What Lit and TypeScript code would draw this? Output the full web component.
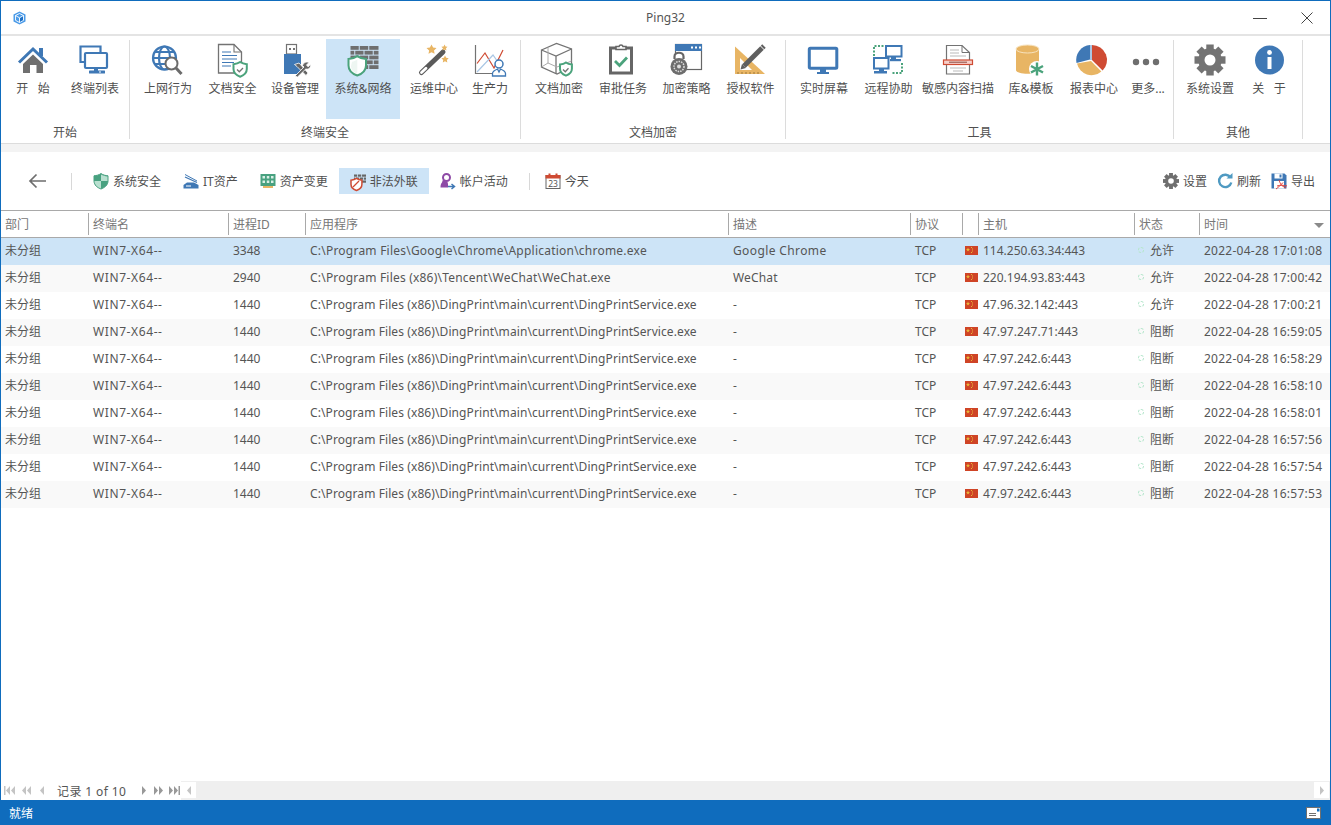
import { LitElement, html, css, svg } from "lit";
import { customElement } from "lit/decorators.js";

const B = "#3f78b5", G = "#737373", GR = "#4ba37c", Y = "#e8b564", R = "#cf4b33";

const shield = (x: number, y: number, s: number, stroke: string, fill: string, sw = 1.6) => svg`
  <g transform="translate(${x} ${y}) scale(${s})">
    <path d="M7 .5 C9 2 11.500 2.600 14 2.800 V8 C14 12 10.500 14.800 7 16 C3.500 14.800 0 12 0 8 V2.800 C2.500 2.600 5 2 7 .5Z" fill=${fill} stroke=${stroke} stroke-width=${sw / s}/>
  </g>`;

const gear = (cx: number, cy: number, r: number, hole: number, col = G) => svg`
  ${[0, 45, 90, 135].map((a) => svg`<rect x=${cx - r * 0.24} y=${cy - r} width=${r * 0.48} height=${r * 2} fill=${col} transform="rotate(${a} ${cx} ${cy})"/>`)}
  <circle cx=${cx} cy=${cy} r=${r * 0.76} fill=${col}/>
  <circle cx=${cx} cy=${cy} r=${hole} fill="#fff"/>`;

const bricks = (x: number, y: number, w: number, rows: number, h: number, gap: number, col: string) => {
  const out = [];
  for (let r = 0; r < rows; r++) {
    const cols = r % 2 ? [0, w * 0.17, w * 0.5, w * 0.83] : [0, w * 0.33, w * 0.67];
    cols.forEach((c, i) => {
      const end = i + 1 < cols.length ? cols[i + 1] - gap : w;
      out.push(svg`<rect x=${x + c} y=${y + r * (h + gap)} width=${end - c} height=${h} fill=${col}/>`);
    });
  }
  return out;
};

const icons: Record<string, unknown> = {
  home: svg`<path d="M6 21 16 11.500 26 21V30H19.500V22H13V30H6Z" fill="#6f6f6f"/>
    <path d="M22 5h4v8h-4z" fill="${B}"/><path d="M2 19.500 16 6l14 13.500" fill="none" stroke="${B}" stroke-width="3"/>`,
  monitors: svg`<path d="M5 19H1.500V3.500H21.500V9" fill="none" stroke="${B}" stroke-width="2.200"/><path d="M8 19H5" stroke="${B}" stroke-width="2"/>
    <rect x="6" y="10" width="22" height="15" rx="1" fill="#fff" stroke="${B}" stroke-width="2.200"/>
    <path d="M15 25h4v3h-4z" fill="${B}"/><rect x="10" y="27.500" width="16" height="3" rx=".5" fill="${B}"/><rect x="20" y="28.500" width="2" height="1" fill="#fff"/>`,
  globe: svg`<g fill="none" stroke="${B}" stroke-width="2.200"><circle cx="12.500" cy="15" r="11.500"/><ellipse cx="12.500" cy="15" rx="5.500" ry="11.500"/><path d="M1 15H24M3 9H22M3 21H22"/></g>
    <circle cx="19.500" cy="20.500" r="6" fill="#fff" stroke="#6b6b6b" stroke-width="2"/><path d="M24 25l5.500 6" stroke="#6b6b6b" stroke-width="3"/>`,
  doc: svg`<path d="M1.500 1.500H17L24.500 9V30H1.500Z" fill="#fff" stroke="${G}" stroke-width="1.300"/><path d="M17 1.500V9H24.500" fill="none" stroke="${G}" stroke-width="1.100"/>
    <path d="M5 9h9M5 12.500h15M5 16h15M5 19.500h12M5 23h9" stroke="${B}" stroke-width="1.100"/>
    ${shield(16.500, 18.500, 0.95, GR, "#fff", 2)}<path d="M20 26.500l2.300 2.300 3.700-3.800" fill="none" stroke="${G}" stroke-width="1.300"/>`,
  usb: svg`<rect x="7.500" y="1.500" width="10" height="9.500" fill="#fff" stroke="${G}" stroke-width="1.200"/><path d="M10 5h2v2h-2zM14 5h2v2h-2z" fill="${G}"/>
    <rect x="5" y="11" width="17" height="20" fill="${B}"/>
    <path d="M15.500 21.500 20 20 29 30 27 32.500 18 23.500Z" fill="#666" stroke="#fff" stroke-width=".8"/>
    <path d="M16 33 25 24 23.500 22.500C25 19 27.500 18.500 30 19.500L27.500 22 29 23.800 31.500 21.500C32 24.500 30 26.800 26.800 26L18.500 34Z" fill="#666" stroke="#fff" stroke-width=".8"/>`,
  wall: svg`${bricks(3.500, 3, 28, 5, 3.800, 1, "#6e6e6e")}
    ${shield(1.500, 12.500, 1.250, GR, "#fff", 2)}<path d="M5 18.800C7 18.300 9 17.600 10.300 16.500V31C7 29.500 4 27 4 23Z" fill="#eef6f2"/>`,
  wand: svg`<path d="M3.500 29.500 25 9" stroke="#5a5a5a" stroke-width="5" stroke-linecap="round"/><path d="M3.500 29.500 8 25.300" stroke="#fff" stroke-width="2.800" stroke-linecap="round"/>
    <path d="M13.500 1.500l1.600 3 3.400.5-2.500 2.400.6 3.400-3.100-1.600-3 1.600.6-3.400L8.500 5l3.400-.5Z" fill="${Y}"/>
    <path d="M26.500 1.500l1 2 2 .3-1.500 1.500.4 2.200-1.900-1-2 1 .4-2.200-1.500-1.500 2.200-.3Z" fill="${Y}"/>
    <path d="M27 12.500l1.200 2.300 2.500.4-1.800 1.700.4 2.500-2.300-1.200-2.200 1.200.4-2.500-1.800-1.700 2.500-.4Z" fill="${Y}"/>`,
  chart: svg`<path d="M1.500 2V30.500H31" fill="none" stroke="${G}" stroke-width="1.200"/>
    <path d="M3 20.500 11 10l9 15 9-18" fill="none" stroke="${R}" stroke-width="1.200"/>
    <path d="M3 29 19 12l9 13" fill="none" stroke="#a9c6e4" stroke-width="1.200"/>
    <circle cx="25" cy="21" r="4" fill="#fff" stroke="${B}" stroke-width="1.500"/>
    <path d="M18.500 33V30.500C18.500 28 21 27 23.500 26L25 29 26.500 26C29 27 31.500 28 31.500 30.500V33Z" fill="#fff" stroke="${B}" stroke-width="1.300"/>`,
  cube: svg`<g fill="none" stroke="${G}" stroke-width="1.300"><path d="M-1.500 7 13.500 .5 28.500 6V24L14 31-1.500 24Z"/><path d="M-1.500 7 13 13 28.500 6M13 13V31"/><path d="M5 4.500V20L-1.500 24M5 20 14 24 28.500 18" stroke="#aaa" stroke-width="1"/></g>
    ${shield(17, 19, 0.85, GR, "#fff", 2)}<path d="M20 26.500l2.300 2.300 3.200-3.500" fill="none" stroke="${G}" stroke-width="1.300"/>`,
  clip: svg`<rect x="3.500" y="5" width="21" height="25" fill="#fff" stroke="#666" stroke-width="3"/><path d="M9 6.500V3.500H12C12.500 1.500 15.500 1.500 16 3.500H19V6.500Z" fill="#fff" stroke="#666" stroke-width="1.600"/>
    <path d="M8 18l4.500 4.500 7.500-8" fill="none" stroke="${GR}" stroke-width="2.800"/>`,
  policy: svg`<rect x="4.500" y="1.500" width="26" height="25" fill="#fff" stroke="#666" stroke-width="1.200"/><rect x="4" y="1" width="27" height="7" fill="${B}"/><path d="M20 3.500h2v2h-2zM24 3.500h2v2h-2zM28 3.500h2v2h-2z" fill="#fff"/>
    <path d="M3.500 16V13.500C3.500 8.500 12.500 8.500 12.500 13.500V16" fill="#fff" stroke="#666" stroke-width="2.200"/>
    <circle cx="8" cy="23.500" r="8.500" fill="#6d6d6d"/><circle cx="8" cy="23.500" r="5" fill="none" stroke="#ddd" stroke-width="1.500" stroke-dasharray="1.500 1"/><circle cx="8" cy="23.500" r="2" fill="#ddd"/>`,
  license: svg`<path d="M0 3.500 30 31H0Z" fill="${Y}"/><path d="M5 15 17 27H5Z" fill="#fff"/><path d="M3 31v-2M7 31v-2M11 31v-2M15 31v-2M19 31v-2M23 31v-2" stroke="#8a6a30" stroke-width=".8"/>
    <path d="M9 23 27 5" stroke="#5f5f5f" stroke-width="5"/><path d="M5.500 26.500 7 21l4 4Z" fill="#5f5f5f"/><path d="M26.500 2 30 5.500" stroke="#5f5f5f" stroke-width="2"/>`,
  screen: svg`<rect x="1.300" y="5.300" width="27.500" height="20" rx="1" fill="#fff" stroke="${B}" stroke-width="3"/><path d="M12 26h6v3h-6z" fill="${B}"/><rect x="9" y="29" width="12" height="2" fill="${B}"/>`,
  remote: svg`<rect x="13" y="3" width="15.500" height="10.500" fill="#fff" stroke="${B}" stroke-width="2"/><path d="M18 14h5v2h-5z" fill="${B}"/><rect x="17" y="16" width="11" height="2.200" fill="${B}"/>
    <rect x="1" y="15" width="14.500" height="10.500" fill="#fff" stroke="${B}" stroke-width="2"/><path d="M6 26h5v2H6z" fill="${B}"/><rect x="1" y="28" width="13" height="2.500" fill="${B}"/>
    <path d="M1 13V3h10M29 20V30H18" fill="none" stroke="${GR}" stroke-width="2" stroke-dasharray="2 1.500"/>`,
  scan: svg`<path d="M4.500 2.500H20L27.500 9.500V31H4.500Z" fill="#fff" stroke="${G}" stroke-width="1.200"/><path d="M20 2.500V9.500H27.500" fill="none" stroke="${G}"/>
    <path d="M8 7h9M8 10h9M8 13h16M8 25h16M11 28h10" stroke="#b9b9b9" stroke-width="1"/>
    <rect x="1.500" y="17" width="29" height="4.500" fill="#f6cfc9" stroke="${R}" stroke-width="1.200"/><path d="M7 19.200H25" stroke="#8a4a40" stroke-width="1"/>`,
  db: svg`<path d="M1 6V27C1 32 24 32 24 27V6Z" fill="${Y}"/><ellipse cx="12.500" cy="6" rx="11.500" ry="4" fill="${Y}" stroke="#f7e3bf" stroke-width="1"/>
    <circle cx="22" cy="26" r="8" fill="#fff"/><g stroke="${GR}" stroke-width="2.400"><path d="M22 19.500v13M16 23l12 6.500M28 23l-12 6.500"/></g>`,
  pie: svg`<path d="M14 17V2A15 15 0 0 1 24.600 27.600Z" fill="#cf4b33"/><path d="M13 18 23.400 28.500A15 15 0 0 1 -1 20.500Z" fill="${Y}"/><path d="M12 16.500-1.500 20A15 15 0 0 1 12 2Z" fill="${B}"/><path d="M12 2h2v15h-2z" fill="#a9c6e4"/>`,
  more: svg`<circle cx="4" cy="19" r="3.200" fill="#6e6e6e"/><circle cx="14" cy="19" r="3.200" fill="#6e6e6e"/><circle cx="24" cy="19" r="3.200" fill="#6e6e6e"/>`,
  gear: gear(16, 17, 15.500, 5.500),
  info: svg`<circle cx="16.500" cy="17" r="14.500" fill="${B}"/><circle cx="16.500" cy="9.500" r="2.400" fill="#fff"/><path d="M14.500 14h4v12h-4z" fill="#fff"/>`,
};

const tool: Record<string, unknown> = {
  sec: svg`${shield(1, 0, 1, "#48a180", "#48a180", 1)}<path d="M8 1.500V8H1.500C1.500 12 5 14.500 8 15.500V8H14.500V3.500C12 3.300 10 2.700 8 1.500Z" fill="#b9e0d0"/>`,
  it: svg`<path d="M2 4 14 9.500" stroke="${B}" stroke-width="1.300"/><path d="M2 1.500 14 8" stroke="${B}" stroke-width="1"/><path d="M4 9.500H11L15.500 12V15.500H.5V12Z" fill="${B}"/><path d="M3 13h5" stroke="#fff" stroke-width="1"/>`,
  chip: svg`<rect x=".5" y="1" width="15" height="12" fill="#48a180"/><path d="M2.500 3h2.500v2.500H2.500zM6.800 3h2.500v2.500H6.800zM11 3h2.500v2.500H11zM2.500 7.500h2.500V10H2.500zM6.800 7.500h2.500V10H6.800zM11 7.500h2.500V10H11z" fill="#d9efe5"/><path d="M3 13h10v2H3z" fill="${Y}"/>`,
  ill: svg`${bricks(4, 1.500, 12, 3, 2.200, 0.8, "#666")}${shield(1, 5, 0.78, R, "#fff", 1.500)}<path d="M3 14 9 8" stroke="${R}" stroke-width="1.200"/>`,
  user: svg`<circle cx="6.500" cy="4.500" r="3.500" fill="none" stroke="#8e4aa6" stroke-width="2"/><path d="M2.800 7 2 9.500C.8 10.800.5 12.500.5 14.500H8V11L7.500 9Z" fill="#8e4aa6"/><path d="M8 13.500H14M11.500 11l3 2.500-3 2.500" fill="none" stroke="${B}" stroke-width="1.500"/>`,
  cal: svg`<rect x="1" y="2.500" width="14" height="13" fill="#fff" stroke="#666" stroke-width="1"/><rect x=".5" y="2" width="15" height="3.500" fill="${R}"/><path d="M3.500 .5h2v3h-2zM10.500 .5h2v3h-2z" fill="${R}"/>`,
  gear: gear(8, 8, 8, 2.800, "#6f6f6f"),
  refresh: svg`<path d="M13.500 4.500A6.200 6.200 0 1 0 14.300 9.500" fill="none" stroke="#4f9ac2" stroke-width="2.400"/><path d="M9.500 5.500H15.500V0Z" fill="#4f9ac2"/>`,
  save: svg`<path d="M.5 .5H13.500L15.500 2.500V15.500H.5Z" fill="${B}"/><rect x="3.500" y=".5" width="8" height="5" fill="#fff"/><rect x="8.500" y="1.500" width="2" height="3" fill="${B}"/><rect x="3" y="8" width="10" height="7.500" fill="#fff"/>
    <path d="M8 7c1 3 2 6 7 8M12 9.500C10 12 7 14.500 5 16M6 13c3-1 7-1 10 0" fill="none" stroke="#e0413a" stroke-width="1"/>`,
};

const groups = [
  { label: "开始", w: 128, pad: 0, items: [["home", "开   始", 64], ["monitors", "终端列表", 60]] },
  { label: "终端安全", w: 390, pad: 5, items: [["globe", "上网行为", 66], ["doc", "文档安全", 63], ["usb", "设备管理", 62], ["wall", "系统&网络", 74, 1], ["wand", "运维中心", 68], ["chart", "生产力", 44]] },
  { label: "文档加密", w: 264, pad: 6, items: [["cube", "文档加密", 64], ["clip", "审批任务", 64], ["policy", "加密策略", 63], ["license", "授权软件", 65]] },
  { label: "工具", w: 387, pad: 5, items: [["screen", "实时屏幕", 66], ["remote", "远程协助", 63], ["scan", "敏感内容扫描", 76], ["db", "库&模板", 70], ["pie", "报表中心", 56], ["more", "更多...", 52]] },
  { label: "其他", w: 128, pad: 4, items: [["gear", "系统设置", 64], ["info", "关   于", 54]] },
] as const;

const DP = "C:\\Program Files (x86)\\DingPrint\\main\\current\\DingPrintService.exe";
// [pid, path, path tracking, description, description tracking, host, state, time]
const rows: [string, string, number, string, number, string, string, string][] = [
  ["3348", "C:\\Program Files\\Google\\Chrome\\Application\\chrome.exe", 0.226, "Google Chrome", 0.38, "114.250.63.34:443", "允许", "2022-04-28 17:01:08"],
  ["2940", "C:\\Program Files (x86)\\Tencent\\WeChat\\WeChat.exe", 0.204, "WeChat", 0.15, "220.194.93.83:443", "允许", "2022-04-28 17:00:42"],
  ["1440", DP, 0.09, "-", 0, "47.96.32.142:443", "允许", "2022-04-28 17:00:21"],
  ["1440", DP, 0.09, "-", 0, "47.97.247.71:443", "阻断", "2022-04-28 16:59:05"],
  ["1440", DP, 0.09, "-", 0, "47.97.242.6:443", "阻断", "2022-04-28 16:58:29"],
  ["1440", DP, 0.09, "-", 0, "47.97.242.6:443", "阻断", "2022-04-28 16:58:10"],
  ["1440", DP, 0.09, "-", 0, "47.97.242.6:443", "阻断", "2022-04-28 16:58:01"],
  ["1440", DP, 0.09, "-", 0, "47.97.242.6:443", "阻断", "2022-04-28 16:57:56"],
  ["1440", DP, 0.09, "-", 0, "47.97.242.6:443", "阻断", "2022-04-28 16:57:54"],
  ["1440", DP, 0.09, "-", 0, "47.97.242.6:443", "阻断", "2022-04-28 16:57:53"],
];
const headers = ["部门", "终端名", "进程ID", "应用程序", "描述", "协议", "", "主机", "状态", "时间"];

const tb = (ic: string, t: string, active = false) => html`
  <div class="tb ${active ? "active" : ""}"><svg class="ti" viewBox="0 0 16 16">${tool[ic]}</svg><span>${t}</span></div>`;
const rt = (ic: string, t: string) => html`
  <div class="rt"><svg class="ti" viewBox="0 0 16 16">${tool[ic]}</svg><span>${t}</span></div>`;

@customElement("app-root")
export class AppRoot extends LitElement {
  static styles = css`
    :host {
      display: flex; flex-direction: column; width: 1331px; height: 825px; box-sizing: border-box;
      border: 1px solid #0f6cbd; border-bottom: 0; background: #fff; overflow: hidden;
      font-family: "Noto Sans", "Noto Sans CJK SC", sans-serif; font-size: 12px; color: #555;
    }
    .title { flex: none; display: flex; align-items: center; justify-content: space-between; border-bottom: 2px solid #e4e4e4; box-sizing: content-box; height: 33px; padding: 0 16px 0 12px; position: relative; }
    .title .name { position: absolute; left: 0; right: 0; text-align: center; color: #555; }
    .logo { width: 13px; height: 14px; }
    .win { display: flex; gap: 33px; align-items: center; }
    .win svg { width: 14px; height: 14px; display: block; }
    .ribbon { flex: none; height: 107px; display: flex; border-bottom: 1px solid #dcdcdc; }
    .group { display: flex; flex-direction: column; flex: none; box-sizing: border-box; padding-top: 3px; }
    .sep { width: 1px; height: 99px; margin-top: 4px; background: #dcdcdc; flex: none; }
    .items { display: flex; height: 80px; }
    .item { display: flex; flex-direction: column; align-items: center; flex: none; color: #505050; white-space: pre; }
    .item.on { background: #cde4f7; }
    .item svg { width: 32px; height: 32px; margin-top: 4px; overflow: visible; flex: none; }
    .item span { margin-top: 6px; line-height: 16px; }
    .glabel { text-align: center; padding-top: 4px; line-height: 20px; color: #505050; }
    .strip { flex: none; height: 8px; background: #f3f3f3; }
    .toolbar { flex: none; height: 58px; display: flex; align-items: center; padding: 0 15px 0 27px; box-sizing: border-box; color: #505050; }
    .back { width: 18px; height: 16px; margin-right: 25px; }
    .vsep { width: 1px; height: 17px; background: #d8d8d8; flex: none; }
    .vsep.a { margin-right: 10px; }
    .vsep.b { margin: 0 4px 0 10px; }
    .tb { height: 26px; display: flex; align-items: center; gap: 4px; padding: 0 11px; flex: none; }
    .tb.active { background: #cde4f7; }
    .ti { width: 16px; height: 16px; flex: none; overflow: visible; }
    .right { margin-left: auto; display: flex; gap: 10px; }
    .rt { display: flex; align-items: center; gap: 4px; }
    .grid { display: grid; grid-template-columns: 87px 140px 77px 423px 182px 52px 16px 156px 65px 131px; }
    .head { flex: none; height: 28px; box-sizing: border-box; border-top: 1px solid #a9a9a9; border-bottom: 1px solid #a9a9a9; color: #777; }
    .hc { box-sizing: border-box; padding: 2px 0 0 4px; margin: 2px 0; line-height: 20px; border-left: 1px solid #a9a9a9; display: flex; justify-content: space-between; align-items: center; }
    .hc:first-child { border-left: 0; }
    .sort { width: 0; height: 0; border: 5px solid transparent; border-top: 5px solid #8a8a8a; border-bottom: 0; margin-right: 6px; }
    .row { flex: none; height: 27px; line-height: 25px; white-space: nowrap; }
    .row.alt { background: #f9f9f9; }
    .row.sel { background: #cde4f7; }
    .c { padding-left: 5px; overflow: hidden; }
    .c0 { padding-left: 4px; }
    .name7 { letter-spacing: 0.6px; }
    .time { letter-spacing: 0.26px; }
    .flag { display: flex; align-items: center; padding: 0 0 2px 3px; }
    .flag svg { width: 13px; height: 9px; display: block; }
    .st { display: flex; align-items: flex-start; gap: 6px; padding-left: 3px; }
    .st i { width: 4px; height: 4px; margin: 9px 0 0 1px; border: 1.500px dashed #b5e6cc; border-radius: 50%; flex: none; }
    .spacer { flex: 1; }
    .bottom { flex: none; height: 19px; display: flex; }
    .pager { width: 180px; flex: none; display: flex; align-items: center; padding-left: 3px; box-sizing: border-box; }
    .pager svg { flex: none; display: block; }
    .ptext { margin: 0 15px 0 12px; white-space: nowrap; letter-spacing: 0.4px; }
    .track { flex: 1; background: #efefef; display: flex; justify-content: space-between; padding: 1px 1px 2px 0; box-sizing: border-box; }
    .sb { width: 15px; background: #fff; display: flex; align-items: center; justify-content: center; }
    .status { flex: none; height: 25px; background: #0f6cbd; color: #fff; display: flex; align-items: center; justify-content: space-between; padding: 0 10px 0 9px; margin: 0 -1px; }
    .mail { width: 15px; height: 12px; display: block; }
  `;

  render() {
    const P = "#c4c4c4";
    return html`
      <div class="title">
        <svg class="logo" viewBox="0 0 13 14"><path d="M6.500 .5 12.500 3.500V10.500L6.500 13.500.5 10.500V3.500Z" fill="#4b9be8"/><path d="M2.500 4.500 6.500 6.800 10.500 4.500M6.500 6.800V11.500M2.500 4.500 6.500 2.500 10.500 4.500V9.300L6.500 11.500 2.500 9.300Z" fill="none" stroke="#fff" stroke-width=".9"/><path d="M7 7.300 10 5.500V9L7 10.700Z" fill="#1f6fc4"/></svg>
        <span class="name">Ping32</span>
        <div class="win">
          <svg viewBox="0 0 14 14"><path d="M0 7.500H14" stroke="#444" stroke-width="1"/></svg>
          <svg viewBox="0 0 14 14"><path d="M1.500 1.500 12.500 12.500M12.500 1.500 1.500 12.500" stroke="#444" stroke-width="1"/></svg>
        </div>
      </div>
      <div class="ribbon">
        ${groups.map((g) => html`
          <div class="group" style="width:${g.w}px">
            <div class="items" style="padding-left:${g.pad}px">
              ${(g.items as readonly (readonly [string, string, number, number?])[]).map((it) => html`
                <div class="item ${it[3] ? "on" : ""}" style="width:${it[2]}px">
                  <svg viewBox="0 0 32 32">${icons[it[0]]}</svg><span>${it[1]}</span>
                </div>`)}
            </div>
            <div class="glabel">${g.label}</div>
          </div>
          <div class="sep"></div>`)}
      </div>
      <div class="strip"></div>
      <div class="toolbar">
        <svg class="back" viewBox="0 0 18 16"><path d="M18 8H2M8.500 1.500 2 8l6.500 6.500" fill="none" stroke="#6e6e6e" stroke-width="1.700"/></svg>
        <div class="vsep a"></div>
        ${tb("sec", "系统安全")}${tb("it", "IT资产")}${tb("chip", "资产变更")}${tb("ill", "非法外联", true)}${tb("user", "帐户活动")}
        <div class="vsep b"></div>
        <div class="tb"><svg class="ti" viewBox="0 0 16 16">${tool.cal}<text x="8" y="14" font-size="8.500" text-anchor="middle" fill="#555" font-family="Noto Sans">23</text></svg><span>今天</span></div>
        <div class="right">${rt("gear", "设置")}${rt("refresh", "刷新")}${rt("save", "导出")}</div>
      </div>
      <div class="grid head">
        ${headers.map((h, i) => html`<div class="hc">${h}${i === 9 ? html`<span class="sort"></span>` : ""}</div>`)}
      </div>
      ${rows.map((r, i) => html`
        <div class="grid row ${i === 0 ? "sel" : i % 2 ? "alt" : ""}">
          <div class="c c0">未分组</div>
          <div class="c name7">WIN7-X64--</div>
          <div class="c">${r[0]}</div>
          <div class="c" style="letter-spacing:${r[2]}px">${r[1]}</div>
          <div class="c" style="letter-spacing:${r[4]}px">${r[3]}</div>
          <div class="c">TCP</div>
          <div class="flag"><svg viewBox="0 0 13 9"><rect width="13" height="9" fill="#cf4426"/><path d="M3 1.500l.6 1.500H5L3.900 4l.4 1.500L3 4.600 1.700 5.500 2.100 4 1 3h1.400Z" fill="#e8b83a"/><path d="M6 1h1v1H6zM7 2.500h1v1H7zM7 4.500h1v1H7zM6 6h1v1H6z" fill="#e8b83a"/></svg></div>
          <div class="c">${r[5]}</div>
          <div class="st"><i></i><span>${r[6]}</span></div>
          <div class="c time">${r[7]}</div>
        </div>`)}
      <div class="spacer"></div>
      <div class="bottom">
        <div class="pager">
          <svg width="11" height="9" viewBox="0 0 11 9"><path d="M0 0h1.500v9H0zM6 0v9L2 4.500ZM11 0v9L7 4.500Z" fill="${P}"/></svg>
          <svg style="margin-left:6px" width="10" height="9" viewBox="0 0 10 9"><path d="M5 0v9L1 4.500ZM10 0v9L6 4.500Z" fill="${P}"/></svg>
          <svg style="margin-left:8px" width="6" height="9" viewBox="0 0 6 9"><path d="M5 0v9L1 4.500Z" fill="${P}"/></svg>
          <span class="ptext">记录 1 of 10</span>
          <svg width="6" height="9" viewBox="0 0 6 9"><path d="M1 0v9L5 4.500Z" fill="#999"/></svg>
          <svg style="margin-left:7px" width="10" height="9" viewBox="0 0 10 9"><path d="M0 0v9L4 4.500ZM5 0v9L9 4.500Z" fill="#999"/></svg>
          <svg style="margin-left:5px" width="11" height="9" viewBox="0 0 11 9"><path d="M0 0v9L4 4.500ZM5 0v9L9 4.500ZM9.500 0H11v9H9.500Z" fill="#999"/></svg>
        </div>
        <div class="track">
          <div class="sb"><svg width="6" height="9" viewBox="0 0 6 9"><path d="M5 0v9L1 4.500Z" fill="${P}"/></svg></div>
          <div class="sb"><svg width="6" height="9" viewBox="0 0 6 9"><path d="M1 0v9L5 4.500Z" fill="${P}"/></svg></div>
        </div>
      </div>
      <div class="status">
        <span>就绪</span>
        <svg class="mail" viewBox="0 0 15 12"><rect x=".5" y=".5" width="14" height="11" fill="#fff" stroke="#6f6f6f"/><rect x="11" y="1.500" width="2.500" height="3" fill="#0f6cbd"/><path d="M3 6.500h7M3 8.500h7" stroke="#6f6f6f"/></svg>
      </div>
    `;
  }
}
